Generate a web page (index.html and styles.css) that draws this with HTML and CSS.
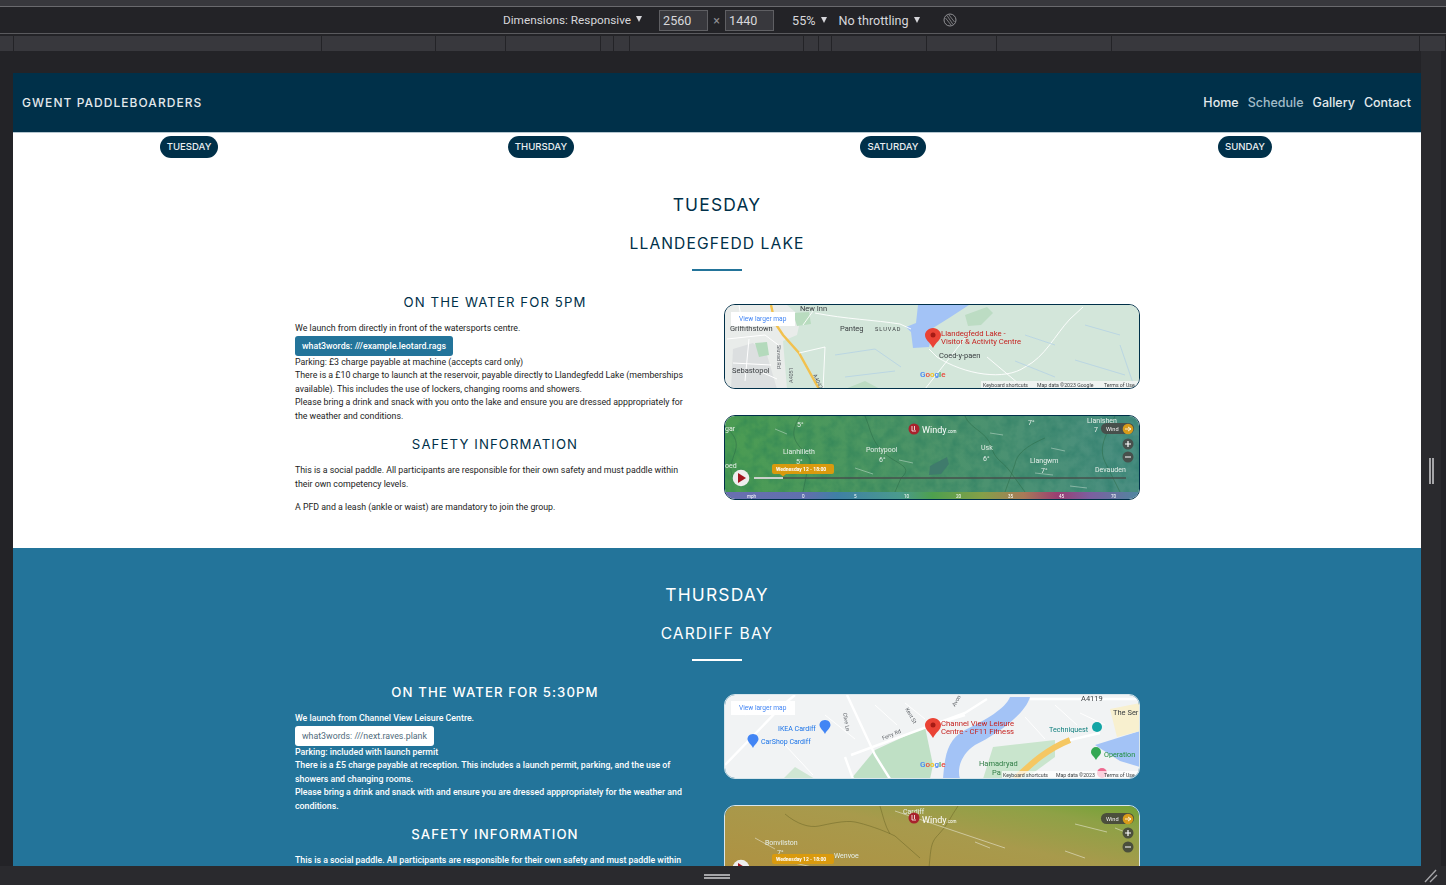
FILE: index.html
```html
<!DOCTYPE html>
<html lang="en">
<head>
    <meta charset="UTF-8">
    <meta name="viewport" content="width=device-width, initial-scale=1.0">
    <title>Gwent Paddleboarders</title>
    <link rel="stylesheet" href="styles.css">
</head>
<body>
<div class="devtools">
    <div class="top-strip"></div>

    <!-- responsive mode toolbar -->
    <div class="toolbar">
        <span class="tool-item dim-item">Dimensions: Responsive <i class="caret"></i></span>
        <span class="size-inputs">
            <span class="size-box">2560</span>
            <span class="times">×</span>
            <span class="size-box">1440</span>
        </span>
        <span class="tool-item zoom-item">55% <i class="caret"></i></span>
        <span class="tool-item">No throttling <i class="caret"></i></span>
        <svg class="touch-icon" width="14" height="14" viewBox="0 0 14 14">
            <circle cx="7" cy="7" r="6" fill="none" stroke="#8f8f93" stroke-width="1"/>
            <path d="M4 2.5 L10 11.5 M6 2 L11.5 9 M2.5 5 L8 12" stroke="#8f8f93" stroke-width=".8" fill="none"/>
        </svg>
    </div>

    <div class="ruler">
        <span></span><span></span><span></span><span></span><span></span><span></span><span></span>
        <span></span><span></span><span></span><span></span><span></span><span></span><span></span><span></span>
    </div>

    <div class="stage">
        <div class="page">
            <nav class="navbar">
                <a class="brand">GWENT PADDLEBOARDERS</a>
                <div class="nav-links">
                    <a>Home</a>
                    <a class="active">Schedule</a>
                    <a>Gallery</a>
                    <a>Contact</a>
                </div>
            </nav>

            <div class="day-tabs">
                <div><a class="pill">TUESDAY</a></div>
                <div><a class="pill">THURSDAY</a></div>
                <div><a class="pill">SATURDAY</a></div>
                <div><a class="pill">SUNDAY</a></div>
            </div>

            <!-- Tuesday -->
            <section class="day">
                <h2>TUESDAY</h2>
                <h3>LLANDEGFEDD LAKE</h3>
                <div class="divider"></div>
                <div class="day-grid">
                    <div class="info">
                        <h4>ON THE WATER FOR 5PM</h4>
                        <p class="details">
                            We launch from directly in front of the watersports centre.<br>
                            <a class="w3w">what3words: ///example.leotard.rags</a><br>
                            Parking: £3 charge payable at machine (accepts card only)<br>
                            There is a £10 charge to launch at the reservoir, payable directly to Llandegfedd Lake (memberships available). This includes the use of lockers, changing rooms and showers.<br>
                            Please bring a drink and snack with you onto the lake and ensure you are dressed apppropriately for the weather and conditions.
                        </p>
                        <h4 class="safety">SAFETY INFORMATION</h4>
                        <p>This is a social paddle. All participants are responsible for their own safety and must paddle within their own competency levels.</p>
                        <p>A PFD and a leash (ankle or waist) are mandatory to join the group.</p>
                    </div>
                    <div class="maps">
                        <div class="map-frame">
                            <svg viewBox="0 0 415 84" width="415" height="84">
                                <defs>
                                    <filter id="mottle" x="0" y="0" width="100%" height="100%">
                                        <feTurbulence type="fractalNoise" baseFrequency=".09" numOctaves="3" seed="4"/>
                                        <feColorMatrix values="0 0 0 0 0  0 0 0 0 .12  0 0 0 0 .08  0 0 0 1.6 -.55"/>
                                    </filter>
                                </defs>
                                <rect width="415" height="84" fill="#d3e6da"/>
                                <path d="M0 0H62L76 12L72 30L58 36L62 84H0Z" fill="#e9ecea"/>
                                <path d="M8 44L28 38L42 50L52 84H6Z" fill="#dcdfe0"/>
                                <path d="M30 38L42 37L44 50L34 52Z" fill="#b4dabc"/>
                                <path d="M68 8L84 7L86 19L72 21Z" fill="#b9dcbf"/>
                                <path d="M240 10L262 2L268 8L256 20L243 21Z" fill="#bcdcc3"/>
                                <path d="M120 84L140 76L155 84Z" fill="#bcdcc3"/>
                                <path d="M193 0H244L224 13L208 23L204 42L188 43L186 27L181 22L191 18Z" fill="#a3c3f6"/>
                                <path d="M46 0L50 18L58 30L74 48L94 84" fill="none" stroke="#f2c14e" stroke-width="2.4"/>
                                <path d="M14 0L18 24M2 34L40 30L56 42M8 58L46 60M24 34L20 76M40 8L62 12M34 66L52 74" fill="none" stroke="#fff" stroke-width="1"/>
                                <path d="M90 8C120 14 150 15 175 19L186 24M74 48L100 42L98 84M78 20L88 6M204 44L212 52C240 70 280 76 300 62C320 52 330 30 345 14L358 2M244 28L200 84M262 52L300 84" fill="none" stroke="#fff" stroke-width=".9"/>
                                <path d="M110 50L150 44L176 62M300 30L330 40M350 55L400 70M120 72L170 66M360 20L395 30M290 56L330 72M395 40L410 84" fill="none" stroke="#a9cbe8" stroke-width=".6"/>
                                <text class="map-label" x="5" y="26">Griffithstown</text>
                                <text class="map-label" x="75" y="6">New Inn</text>
                                <text class="map-label" x="115" y="26">Panteg</text>
                                <text class="map-label spaced" x="150" y="26">SLUVAD</text>
                                <text class="map-label" x="7" y="68">Sebastopol</text>
                                <text class="map-road" transform="rotate(90 52 40)" x="52" y="40">Sluvad Rd</text>
                                <text class="map-road" transform="rotate(-90 68 78)" x="68" y="78">A4051</text>
                                <text class="map-road" transform="rotate(65 88 70)" x="88" y="70">A4042</text>
                                <path d="M208 23C203 23 200 27 200 30C200 35 205 37 208 43C211 37 216 35 216 30C216 27 213 23 208 23Z" fill="#ea4335"/>
                                <circle cx="208" cy="30" r="2.5" fill="#a61b14"/>
                                <text class="map-place" x="216" y="31">Llandegfedd Lake -</text>
                                <text class="map-place" x="216" y="39">Visitor &amp; Activity Centre</text>
                                <text class="map-label" x="214" y="53">Coed-y-paen</text>
                                <text class="map-google" x="195" y="72"><tspan fill="#4285f4">G</tspan><tspan fill="#ea4335">o</tspan><tspan fill="#fbbc05">o</tspan><tspan fill="#4285f4">g</tspan><tspan fill="#34a853">l</tspan><tspan fill="#ea4335">e</tspan></text>
                                <rect x="256" y="76" width="159" height="8" fill="#f3f5f4" opacity=".85"/>
                                <text class="map-foot" x="258" y="82">Keyboard shortcuts</text>
                                <text class="map-foot" x="312" y="82">Map data ©2023 Google</text>
                                <text class="map-foot" x="379" y="82">Terms of Use</text>
                                <rect x="6" y="7" width="64" height="14" fill="#fff"/>
                                <text class="map-link" x="14" y="16">View larger map</text>
                            </svg>
                        </div>
                        <div class="map-frame">
                            <svg viewBox="0 0 415 84" width="415" height="84">
                                <defs>
                                    <linearGradient id="windGreen" x1="0" x2="1">
                                        <stop offset="0" stop-color="#4b9c52"/>
                                        <stop offset=".45" stop-color="#4c9467"/>
                                        <stop offset="1" stop-color="#4a8e82"/>
                                    </linearGradient>
                                    <linearGradient id="windScale" x1="0" x2="1">
                                        <stop offset="0" stop-color="#6a6fb0"/>
                                        <stop offset=".2" stop-color="#5f70ad"/>
                                        <stop offset=".27" stop-color="#3f80a5"/>
                                        <stop offset=".42" stop-color="#4a9a8e"/>
                                        <stop offset=".5" stop-color="#4ea04e"/>
                                        <stop offset=".62" stop-color="#85a048"/>
                                        <stop offset=".72" stop-color="#a87a58"/>
                                        <stop offset=".8" stop-color="#9a3f72"/>
                                        <stop offset=".88" stop-color="#7c5fa0"/>
                                        <stop offset="1" stop-color="#4f88a0"/>
                                    </linearGradient>
                                </defs>
                                <rect width="415" height="84" fill="url(#windGreen)"/>
                                <rect width="415" height="84" filter="url(#mottle)" opacity=".3"/>
                                <path d="M0 10C8 18 14 24 10 36S4 52 8 62M75 0C68 12 66 20 74 30S90 42 82 56L78 76M140 0C146 14 146 24 158 36S190 50 176 62L170 76M240 0C244 12 262 16 266 30S276 44 284 54L300 76M320 22C306 28 292 36 290 48L280 76M390 0C384 14 372 30 380 46L395 76" fill="none" stroke="#2c6b47" stroke-width=".7" opacity=".75"/>
                                <path d="M205 50L222 41L224 48L216 58L204 59Z" fill="#3f7b6c"/>
                                <path d="M50 13L62 18M174 44L188 47M265 17L278 19M326 32L340 35M310 57L328 59M345 70L362 72M130 52L148 58" stroke="#cfe4d6" stroke-width=".7" opacity=".7"/>
                                <text class="wind-label" x="0" y="15">gar</text>
                                <text class="wind-label" x="72" y="11">5°</text>
                                <text class="wind-label" x="58" y="38">Llanhilleth</text>
                                <text class="wind-label" x="71" y="48">5°</text>
                                <text class="wind-label" x="141" y="36">Pontypool</text>
                                <text class="wind-label" x="154" y="46">6°</text>
                                <text class="wind-label" x="256" y="34">Usk</text>
                                <text class="wind-label" x="258" y="45">6°</text>
                                <text class="wind-label" x="305" y="47">Llangwm</text>
                                <text class="wind-label" x="316" y="57">7°</text>
                                <text class="wind-label" x="303" y="9">7°</text>
                                <text class="wind-label" x="362" y="7">Llanishen</text>
                                <text class="wind-label" x="369" y="16">7</text>
                                <text class="wind-label" x="370" y="56">Devauden</text>
                                <text class="wind-label" x="0" y="52">oed</text>
                                <circle cx="189" cy="13" r="5.5" fill="#a8222c"/>
                                <path d="M187 10V15H191M189.5 10V14" stroke="#fff" stroke-width=".8" fill="none"/>
                                <text class="windy-logo" x="197" y="17">Windy<tspan class="windy-com">.com</tspan></text>
                                <rect x="376" y="7" width="33" height="11" rx="5.5" fill="#47504c"/>
                                <text class="wind-pill" x="381" y="15">Wind</text>
                                <circle cx="403" cy="13" r="5.3" fill="#d79a1a"/>
                                <path d="M400 13H406M403 11L406 13L403 15" stroke="#fff" stroke-width=".8" fill="none"/>
                                <circle cx="403" cy="28" r="5.5" fill="#47504c"/>
                                <circle cx="403" cy="41" r="5.5" fill="#47504c"/>
                                <path d="M400 28H406M403 25V31M400 41H406" stroke="#fff" stroke-width="1.2"/>
                                <path d="M29 62H401" stroke="#46504c" stroke-width="1.6"/>
                                <path d="M29 62H58" stroke="#eee" stroke-width="1.6"/>
                                <circle cx="16" cy="62" r="8.3" fill="#eee"/>
                                <path d="M13 57L21 62L13 67Z" fill="#a3151f"/>
                                <rect x="47" y="48" width="62" height="10" rx="2" fill="#d99a0e"/>
                                <path d="M55 58H61L58 60.5Z" fill="#d99a0e"/>
                                <text class="wind-date" x="51" y="55">Wednesday 12 - 18:00</text>
                                <rect y="76" width="415" height="8" fill="url(#windScale)"/>
                                <g class="wind-scale">
                                    <text x="22" y="82">mph</text><text x="77" y="82">0</text><text x="129" y="82">5</text>
                                    <text x="179" y="82">10</text><text x="231" y="82">20</text><text x="283" y="82">35</text>
                                    <text x="334" y="82">45</text><text x="386" y="82">70</text>
                                </g>
                            </svg>
                        </div>
                    </div>
                </div>
            </section>

            <!-- Thursday -->
            <section class="day day-alt">
                <h2>THURSDAY</h2>
                <h3>CARDIFF BAY</h3>
                <div class="divider"></div>
                <div class="day-grid">
                    <div class="info">
                        <h4>ON THE WATER FOR 5:30PM</h4>
                        <p class="details">
                            We launch from Channel View Leisure Centre.<br>
                            <a class="w3w">what3words: ///next.raves.plank</a><br>
                            Parking: included with launch permit<br>
                            There is a £5 charge payable at reception. This includes a launch permit, parking, and the use of showers and changing rooms.<br>
                            Please bring a drink and snack with and ensure you are dressed apppropriately for the weather and conditions.
                        </p>
                        <h4 class="safety">SAFETY INFORMATION</h4>
                        <p>This is a social paddle. All participants are responsible for their own safety and must paddle within their own competency levels.</p>
                    </div>
                    <div class="maps">
                        <div class="map-frame">
                            <svg viewBox="0 0 415 84" width="415" height="84">
                                <rect width="415" height="84" fill="#f1f3f4"/>
                                <path d="M126 84L150 55L200 32L208 70L205 84Z" fill="#bfe0c5"/>
                                <path d="M258 84L268 52L330 45L330 62L300 84Z" fill="#c9e5cd"/>
                                <path d="M58 84L70 72L90 84Z" fill="#cfe6d3"/>
                                <path d="M285 2H305C300 20 270 40 250 50C235 60 232 75 235 84H218C220 60 222 45 240 35C262 24 280 14 285 2Z" fill="#a3c3f6"/>
                                <path d="M370 50L415 36V72L395 66Z" fill="#a3c3f6"/>
                                <path d="M385 14L415 8V36L392 42Z" fill="#f8f0cf"/>
                                <path d="M290 84C305 70 320 55 345 45" fill="none" stroke="#f5c762" stroke-width="6"/>
                                <path d="M122 0L150 60L165 84M126 60L240 18L262 4M120 62L128 84M0 70L58 10L70 0M200 32L240 20M305 4H415M345 45L375 38" fill="none" stroke="#fff" stroke-width="2.4"/>
                                <path d="M20 20L45 4M180 8L200 24M300 22L320 44M355 18L380 30M100 20L130 44M60 50L88 80M150 10L172 30M330 10L352 30" fill="none" stroke="#fff" stroke-width="1"/>
                                <text class="map-road" transform="rotate(-22 158 45)" x="158" y="45">Ferry Rd</text>
                                <text class="map-road" transform="rotate(60 180 14)" x="180" y="14">Kent St</text>
                                <text class="map-road" transform="rotate(80 118 18)" x="118" y="18">Clive Ln</text>
                                <text class="map-road" transform="rotate(-60 230 12)" x="230" y="12">Avon</text>
                                <text class="map-poi" x="53" y="36">IKEA Cardiff</text>
                                <path d="M100 25C96 25 94.500 28 94.500 30C94.500 33 98 35 100 39C102 35 105.500 33 105.500 30C105.500 28 104 25 100 25Z" fill="#4285f4"/>
                                <path d="M28 39C24 39 22.500 42 22.500 44C22.500 47 26 49 28 53C30 49 33.500 47 33.500 44C33.500 42 32 39 28 39Z" fill="#4285f4"/>
                                <text class="map-poi" x="36" y="49">CarShop Cardiff</text>
                                <path d="M208 23C203 23 200 27 200 30C200 35 205 37 208 43C211 37 216 35 216 30C216 27 213 23 208 23Z" fill="#ea4335"/>
                                <circle cx="208" cy="30" r="2.5" fill="#a61b14"/>
                                <text class="map-place" x="216" y="31">Channel View Leisure</text>
                                <text class="map-place" x="216" y="39">Centre - CF11 Fitness</text>
                                <text class="map-label park" x="254" y="71">Hamadryad</text>
                                <text class="map-label park" x="267" y="80">Pa</text>
                                <text class="map-teal" x="324" y="37">Techniquest</text>
                                <circle cx="372" cy="32" r="5" fill="#12a5a5"/>
                                <path d="M371 57m-5 0a5 5 0 0 1 10 0c0 3-3 4-5 8c-2-4-5-5-5-8Z" fill="#34a853"/>
                                <text class="map-teal green" x="379" y="62">Operation</text>
                                <text class="map-label" x="388" y="20">The Ser</text>
                                <text class="map-label" x="356" y="6">A4119</text>
                                <text class="map-google" x="195" y="72"><tspan fill="#4285f4">G</tspan><tspan fill="#ea4335">o</tspan><tspan fill="#fbbc05">o</tspan><tspan fill="#4285f4">g</tspan><tspan fill="#34a853">l</tspan><tspan fill="#ea4335">e</tspan></text>
                                <circle cx="377" cy="78" r="5" fill="#ee6a90"/>
                                <rect x="277" y="76" width="138" height="8" fill="#fff" opacity=".7"/>
                                <text class="map-foot" x="278" y="82">Keyboard shortcuts</text>
                                <text class="map-foot" x="331" y="82">Map data ©2023</text>
                                <text class="map-foot" x="379" y="82">Terms of Use</text>
                                <rect x="6" y="6" width="64" height="14" fill="#fff"/>
                                <text class="map-link" x="14" y="15">View larger map</text>
                            </svg>
                        </div>
                        <div class="map-frame">
                            <svg viewBox="0 0 415 84" width="415" height="84">
                                <defs>
                                    <linearGradient id="windOlive" x1="0" y1="1" x2="1" y2="0">
                                        <stop offset="0" stop-color="#b08f3f"/>
                                        <stop offset=".6" stop-color="#a89a4c"/>
                                        <stop offset=".85" stop-color="#8ea146"/>
                                        <stop offset="1" stop-color="#72a235"/>
                                    </linearGradient>
                                </defs>
                                <rect width="415" height="84" fill="url(#windOlive)"/>
                                <path d="M233 0C226 10 222 20 214 28S206 40 204 62M60 8C72 18 84 22 94 20S120 14 130 16S158 24 170 30L195 52M155 0C158 10 160 20 165 28" fill="none" stroke="#6f6a2a" stroke-width=".7" opacity=".8"/>
                                <path d="M170 5L280 42M30 32L50 43M250 36L265 42M340 45L360 52M60 55L110 66M350 18L382 26M390 22L400 26" stroke="#ecebdc" stroke-width=".7" opacity=".8"/>
                                <text class="wind-label" x="178" y="8">Cardiff</text>
                                <text class="wind-label" x="40" y="39">Bonvilston</text>
                                <text class="wind-label" x="52" y="49">7°</text>
                                <text class="wind-label" x="109" y="52">Wenvoe</text>
                                <circle cx="189" cy="12" r="5.5" fill="#a8222c"/>
                                <path d="M187 9V14H191M189.500 9V13" stroke="#fff" stroke-width=".8" fill="none"/>
                                <text class="windy-logo" x="197" y="17">Windy<tspan class="windy-com">.com</tspan></text>
                                <rect x="376" y="7" width="33" height="11" rx="5.5" fill="#4b4f3c"/>
                                <text class="wind-pill" x="381" y="15">Wind</text>
                                <circle cx="403" cy="13" r="5.3" fill="#d79a1a"/>
                                <path d="M400 13H406M403 11L406 13L403 15" stroke="#fff" stroke-width=".8" fill="none"/>
                                <circle cx="403" cy="27" r="5.5" fill="#4b4f3c"/>
                                <circle cx="403" cy="41" r="5.5" fill="#4b4f3c"/>
                                <path d="M400 27H406M403 24V30M400 41H406" stroke="#fff" stroke-width="1.2"/>
                                <circle cx="16" cy="62" r="8.3" fill="#eee"/>
                                <path d="M13 57L21 62L13 67Z" fill="#a3151f"/>
                                <rect x="47" y="48" width="62" height="10" rx="2" fill="#d99a0e"/>
                                <text class="wind-date" x="51" y="55">Wednesday 12 - 18:00</text>
                            </svg>
                        </div>
                    </div>
                </div>
            </section>
        </div>
        <div class="side-handle"><span></span><span></span></div>
        <div class="side-edge"></div>
    </div>

    <div class="bottom-bar">
        <div class="bottom-handle"><span></span><span></span></div>
        <svg class="resize-grip" width="14" height="14" viewBox="0 0 14 14">
            <path d="M1 13L12 1M6 13L13 6" stroke="#a5a5a8" stroke-width="1.4" fill="none"/>
        </svg>
    </div>
</div>
</body>
</html>
```

FILE: styles.css
```css
* {
    box-sizing: border-box;
}

html, body {
    margin: 0;
    height: 100%;
    overflow: hidden;
}

body {
    font-family: 'Roboto', 'Liberation Sans', sans-serif;
    background-color: #232327;
}

.devtools {
    display: flex;
    flex-direction: column;
    height: 885px;
}

.top-strip {
    height: 7px;
    flex: none;
    background-color: #38383d;
    border-bottom: 1px solid #6a6a6e;
}

.toolbar {
    height: 27px;
    flex: none;
    display: flex;
    align-items: center;
    padding-left: 503px;
    background-color: #232327;
    border-bottom: 1px solid #5a5a5e;
    color: #d7d7db;
    font-size: 12.6px;
}

.tool-item {
    white-space: nowrap;
}

.dim-item {
    font-size: 11.8px;
}

.zoom-item {
    margin-left: 18px;
    margin-right: 12px;
}

.caret {
    display: inline-block;
    width: 0;
    height: 0;
    margin-left: 2px;
    vertical-align: 2px;
    border-left: 3.5px solid transparent;
    border-right: 3.5px solid transparent;
    border-top: 6px solid #d7d7db;
}

.size-inputs {
    display: flex;
    align-items: center;
    margin-left: 17px;
}

.size-box {
    width: 49px;
    height: 21px;
    padding: 2px 3px;
    background-color: #38383d;
    border: 1px solid #5f5f63;
}

.times {
    width: 17px;
    text-align: center;
    color: #8f8f93;
}

.touch-icon {
    margin-left: 23px;
}

.ruler {
    height: 15px;
    flex: none;
    margin-top: 2px;
    display: grid;
    grid-template-columns: 14px 308px 114px 70px 95px 13px 16px 174px 15px 13px 95px 70px 115px 308px 26px;
    background-color: #38383d;
}

.ruler span {
    border-right: 1px solid #232327;
}

.stage {
    flex: 1;
    min-height: 0;
    display: flex;
    padding-top: 22px;
    padding-left: 13px;
}

.page {
    width: 1408px;
    flex: none;
    overflow: hidden;
    background-color: white;
    color: #003049;
}

.side-handle {
    width: 20px;
    margin-top: -22px;
    flex: none;
    display: flex;
    justify-content: center;
    align-items: center;
    gap: 1px;
    padding-top: 24px;
    background-color: #2a2a2e;
}

.side-handle span {
    width: 2px;
    height: 26px;
    background-color: #a5a5a8;
}

.side-edge {
    flex: 1;
    margin-top: -22px;
    background-color: #232327;
}

.bottom-bar {
    height: 19px;
    flex: none;
    position: relative;
    display: flex;
    justify-content: center;
    background-color: #2a2a2e;
}

.bottom-handle {
    margin-top: 8px;
    margin-right: 12px;
    width: 26px;
}

.bottom-handle span {
    display: block;
    height: 2px;
    margin-bottom: 1px;
    background-color: #a5a5a8;
}

.resize-grip {
    position: absolute;
    right: 8px;
    bottom: 2px;
}

.navbar {
    height: 60px;
    display: flex;
    justify-content: space-between;
    align-items: center;
    padding: 0 10px 0 9px;
    background-color: #003049;
    border-bottom: 1px solid #b5c6cf;
    color: #e3e9ec;
    font-family: 'Inter', 'Liberation Sans', sans-serif;
}

.brand {
    font-size: 12px;
    font-weight: 500;
    letter-spacing: 1.05px;
}

.nav-links {
    display: flex;
    gap: 9px;
    font-size: 12.5px;
    font-weight: 500;
}

.nav-links .active {
    color: #a3bcc8;
}

.day-tabs {
    display: grid;
    grid-template-columns: repeat(4, 1fr);
    height: 25px;
    padding-top: 2px;
    text-align: center;
}

.pill {
    display: inline-block;
    height: 22px;
    line-height: 22px;
    padding: 0 7px;
    border-radius: 11px;
    background-color: #003049;
    color: #e9eef1;
    font-family: 'Inter', 'Liberation Sans', sans-serif;
    font-size: 9.6px;
    font-weight: 500;
}

.day {
    padding-top: 36px;
    height: 390px;
    text-align: center;
}

.day-alt {
    background-color: #23749a;
    color: white;
}

h2, h3, h4 {
    margin: 0;
    font-family: 'Inter', 'Liberation Sans', sans-serif;
    font-weight: 400;
}

h2 {
    font-size: 17.4px;
    line-height: 21px;
    letter-spacing: 1.2px;
}

h3 {
    margin-top: 19px;
    font-size: 15.6px;
    line-height: 20px;
    letter-spacing: 1.1px;
}

.divider {
    width: 50px;
    height: 2px;
    margin: 15px auto 0;
    background-color: #23749a;
}

.day-alt .divider {
    background-color: white;
}

.day-grid {
    display: grid;
    grid-template-columns: 400px 415px;
    gap: 29px;
    justify-content: center;
    margin-top: 22px;
    text-align: left;
}

.info p {
    margin: 0 0 10px;
    font-size: 8.8px;
    line-height: 13.5px;
    color: #1c1c1c;
}

.day-alt .info p {
    color: white;
    font-weight: 500;
}

.info h4 {
    font-size: 13.2px;
    line-height: 18px;
    letter-spacing: 1.1px;
    text-align: center;
    margin-bottom: 11px;
}

.day-alt h4 {
    font-weight: 500;
}

.info .safety {
    margin-top: 12px;
}

.info .details {
    margin-bottom: 0;
}

.w3w {
    display: inline-block;
    height: 20px;
    line-height: 20px;
    padding: 0 7px;
    border-radius: 3px;
    background-color: #23749a;
    color: white;
    font-weight: 500;
    vertical-align: top;
}

.day-alt .w3w {
    background-color: white;
    color: #4f6b7b;
    font-weight: 400;
}

.maps {
    padding-top: 11px;
    display: flex;
    flex-direction: column;
    gap: 26px;
}

.map-frame {
    width: 416px;
    height: 85px;
    border: 1px solid #003049;
    border-radius: 11px;
    overflow: hidden;
}

.day-alt .map-frame {
    border-color: #d8e6ec;
}

.map-frame svg {
    display: block;
    filter: blur(.3px);
}

.map-frame text {
    font-family: 'Roboto', 'Liberation Sans', sans-serif;
}

.map-label {
    font-size: 7.5px;
    fill: #3c4043;
}

.map-label.spaced {
    font-size: 5.6px;
    letter-spacing: 1px;
}

.map-label.park {
    fill: #2f7d45;
}

.map-place {
    font-size: 7.7px;
    fill: #c5221f;
}

.map-google {
    font-size: 8px;
    font-weight: 500;
}

.map-foot {
    font-size: 5.2px;
    fill: #3c4043;
}

.map-link {
    font-size: 6.6px;
    fill: #4285f4;
}

.map-road {
    font-size: 5.4px;
    fill: #5f6368;
}

.map-poi {
    font-size: 7px;
    fill: #1a73e8;
}

.map-teal {
    font-size: 7.2px;
    fill: #12807f;
}

.map-teal.green {
    fill: #1e8e3e;
}

.wind-label {
    font-size: 7px;
    fill: #e6efe9;
}

.windy-logo {
    font-size: 9px;
    fill: white;
}

.windy-com {
    font-size: 4.5px;
}

.wind-pill {
    font-size: 5.6px;
    fill: #f0f0f0;
}

.wind-date {
    font-size: 5px;
    font-weight: 700;
    fill: white;
}

.wind-scale text {
    font-size: 4.6px;
    fill: white;
}
```
